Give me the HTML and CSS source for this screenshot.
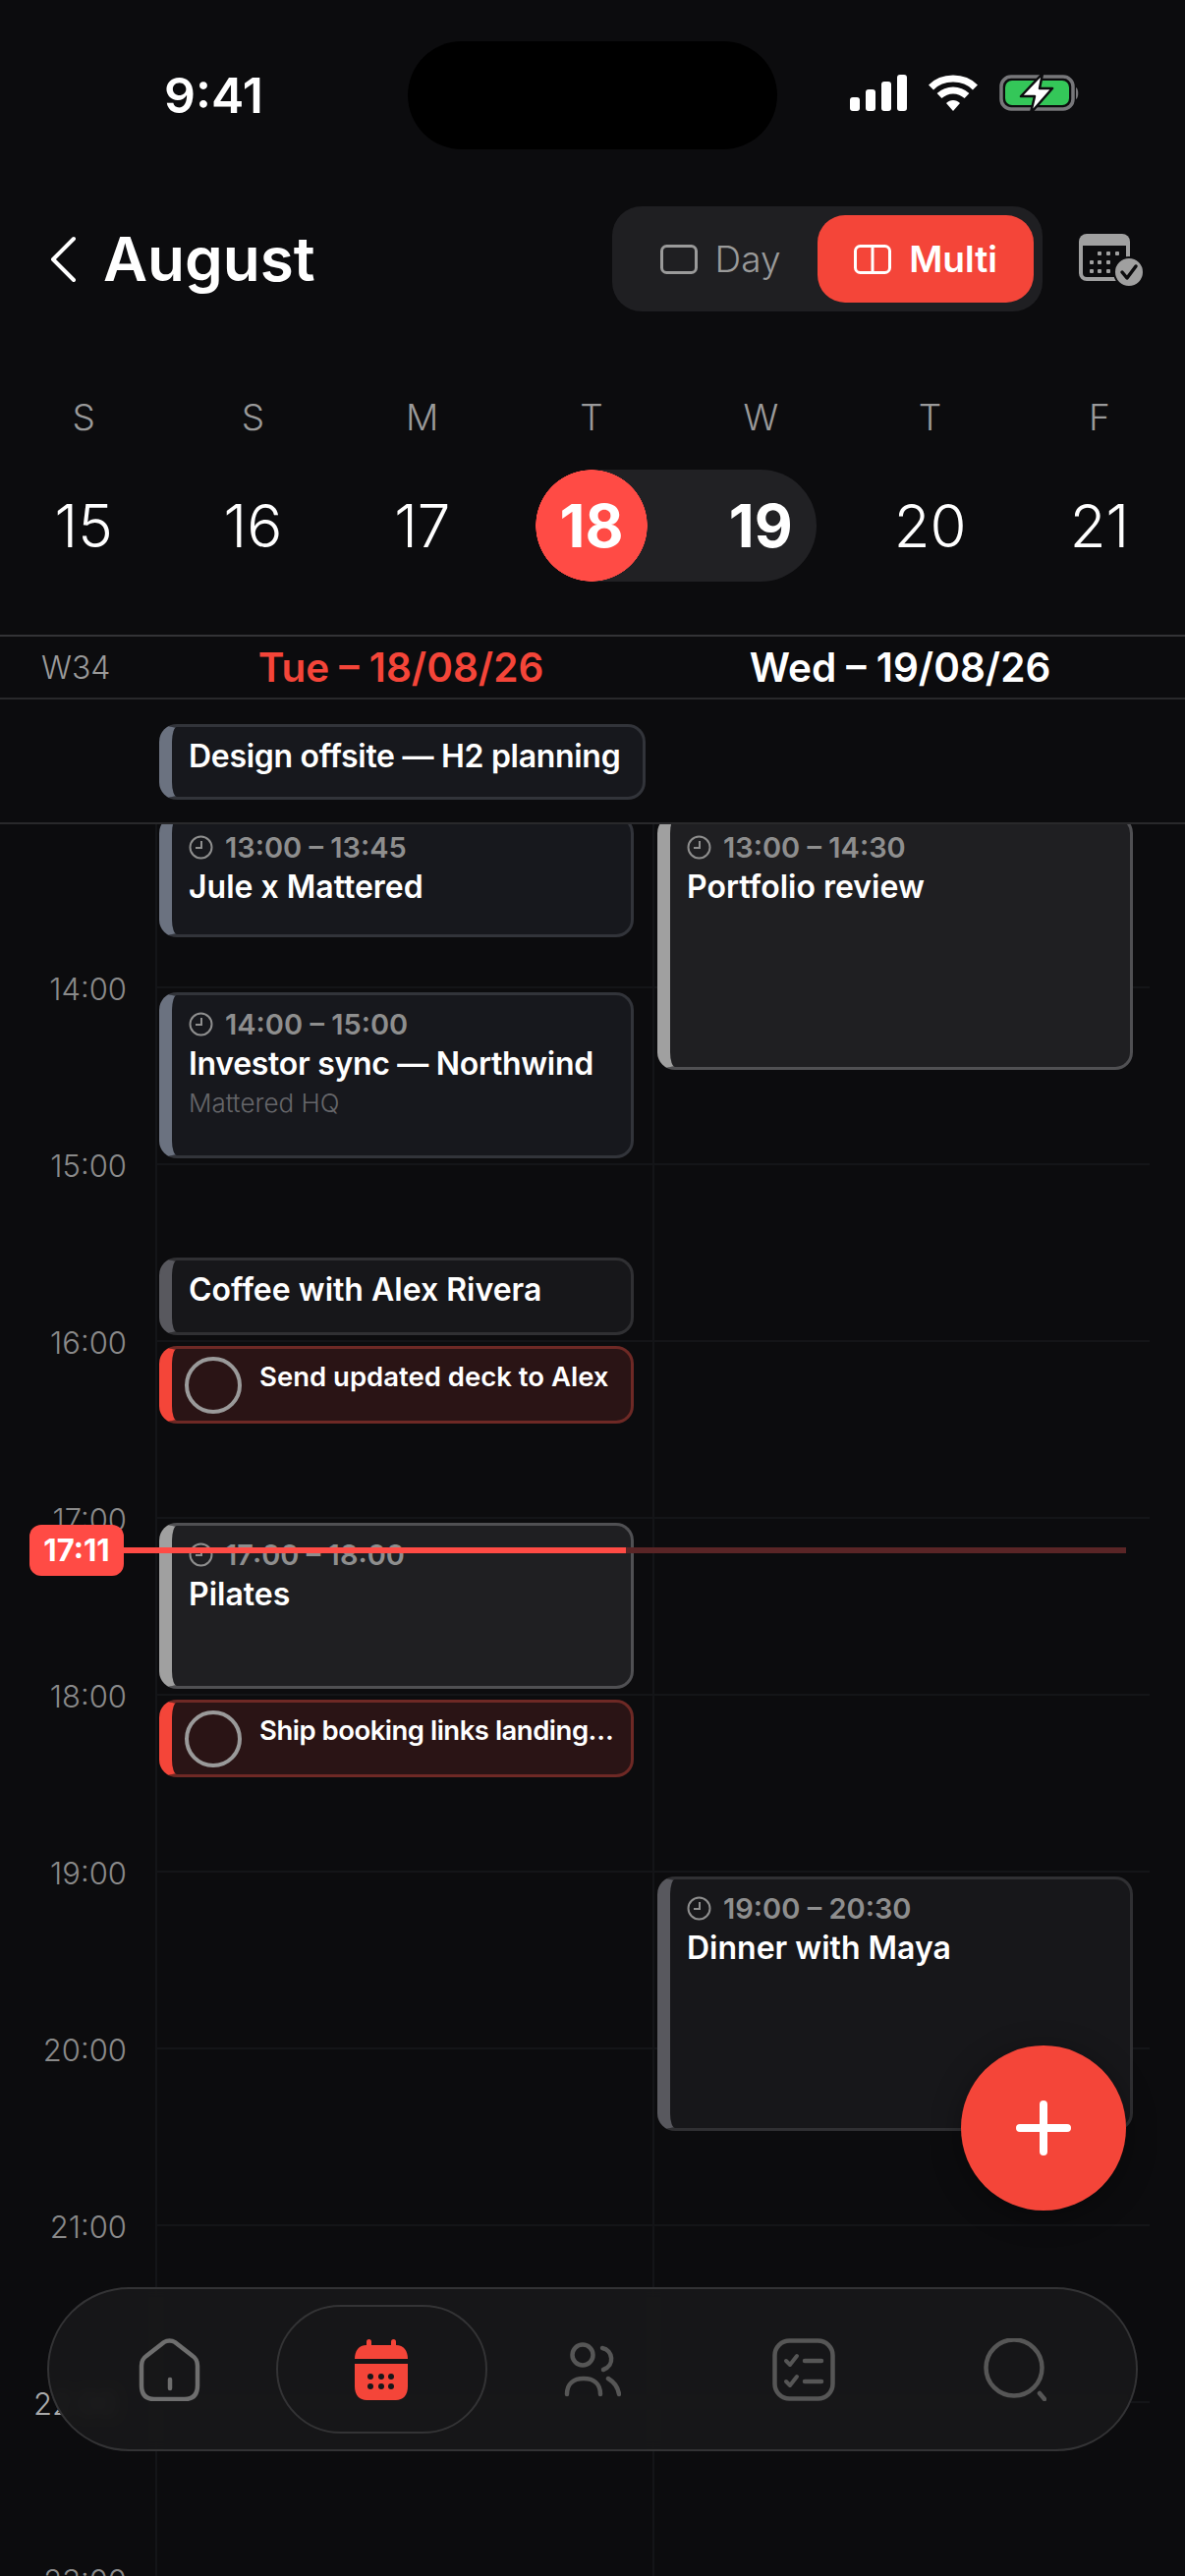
FILE: index.html
```html
<!DOCTYPE html>
<html>
  <head>
    <title>Calendar</title>
    <link rel="stylesheet" href="styles.css">
  </head>
  <body>
    <div class="phone">
      <div class="status-bar">
        <span class="clock">9:41</span>
        <div class="island"></div>
        <div class="status-icons">
          <svg width="58" height="37" viewBox="0 0 58 37" fill="#fff">
            <rect x="0" y="23" width="10" height="14" rx="3" />
            <rect x="16" y="15" width="10" height="22" rx="3" />
            <rect x="32" y="7" width="10" height="30" rx="3" />
            <rect x="48" y="0" width="10" height="37" rx="3" />
          </svg>
          <svg width="50" height="37" viewBox="0 0 50 37" fill="none" stroke="#fff" stroke-width="7">
            <path d="M2.5 13 C14 1 36 1 47.5 13" />
            <path d="M11 21.5 C19 14 31 14 39 21.5" />
            <path d="M18 29 L25 37 L32 29 C28 25 22 25 18 29 Z" fill="#fff" stroke="none" />
          </svg>
          <svg width="82" height="40" viewBox="0 0 82 40">
            <rect x="2" y="3" width="73" height="33" rx="10" fill="none" stroke="#77777a" stroke-width="3.5" />
            <rect x="6" y="7" width="65" height="25" rx="7" fill="#34c759" />
            <path d="M78 14 C81 15 81 25 78 26 Z" fill="#77777a" />
            <path d="M44 0 L22 23 H36 L32 40 L54 15 H41 Z" fill="#fff" stroke="#0c0c0e" stroke-width="2.5" stroke-linejoin="round" />
          </svg>
        </div>
      </div>

      <div class="top-bar">
        <svg class="back" width="28" height="48" viewBox="0 0 28 48" fill="none" stroke="#fff" stroke-width="4" stroke-linecap="round" stroke-linejoin="round">
          <path d="M25 3 L4 24 L25 45" />
        </svg>
        <h1>August</h1>
        <div class="toggle">
          <div class="toggle-item">
            <svg width="38" height="30" viewBox="0 0 38 30" fill="none" stroke="#9a9a9a" stroke-width="3">
              <rect x="1.5" y="1.5" width="35" height="27" rx="5" />
            </svg>
            Day
          </div>
          <div class="toggle-item active">
            <svg width="38" height="30" viewBox="0 0 38 30" fill="none" stroke="#fff" stroke-width="3">
              <rect x="1.5" y="1.5" width="35" height="27" rx="5" />
              <path d="M19 1.5 V28.5" />
            </svg>
            Multi
          </div>
        </div>
        <svg class="cal-check" width="66" height="54" viewBox="0 0 66 54">
          <path d="M8 0 H44 A8 8 0 0 1 52 8 V12 H0 V8 A8 8 0 0 1 8 0 Z" fill="#a0a0a0" />
          <path d="M2 10 V40 A6 6 0 0 0 8 46 H40 M50 10 V26" fill="none" stroke="#a0a0a0" stroke-width="4" />
          <g fill="#a0a0a0">
            <rect x="19" y="18" width="4" height="4" rx="1" /><rect x="28" y="18" width="4" height="4" rx="1" /><rect x="37" y="18" width="4" height="4" rx="1" />
            <rect x="11" y="27" width="4" height="4" rx="1" /><rect x="19" y="27" width="4" height="4" rx="1" /><rect x="28" y="27" width="4" height="4" rx="1" />
            <rect x="11" y="36" width="4" height="4" rx="1" /><rect x="19" y="36" width="4" height="4" rx="1" /><rect x="28" y="36" width="4" height="4" rx="1" />
          </g>
          <circle cx="51" cy="39" r="15" fill="#a0a0a0" stroke="#0c0c0e" stroke-width="2" />
          <path d="M44 39 L49 45 L58 33" fill="none" stroke="#0c0c0e" stroke-width="3.5" stroke-linecap="round" stroke-linejoin="round" />
        </svg>
      </div>

      <div class="week">
        <div class="week-day"><span class="letter">S</span><span class="date">15</span></div>
        <div class="week-day"><span class="letter">S</span><span class="date">16</span></div>
        <div class="week-day"><span class="letter">M</span><span class="date">17</span></div>
        <div class="week-day"><span class="letter">T</span><span class="date range-start">18</span></div>
        <div class="week-day"><span class="letter">W</span><span class="date range-end">19</span></div>
        <div class="week-day"><span class="letter">T</span><span class="date">20</span></div>
        <div class="week-day"><span class="letter">F</span><span class="date">21</span></div>
      </div>

      <div class="day-heads">
        <span class="week-no">W34</span>
        <span class="day-head today">Tue – 18/08/26</span>
        <span class="day-head">Wed – 19/08/26</span>
      </div>

      <div class="all-day">
        <div class="event blue">
          <div class="title tight">Design offsite — H2 planning</div>
        </div>
      </div>

      <div class="timeline">
        <div class="hours">
          <span>13:00</span><span>14:00</span><span>15:00</span><span>16:00</span><span>17:00</span>
          <span>18:00</span><span>19:00</span><span>20:00</span><span>21:00</span><span class="under-glass">22:00</span><span>23:00</span>
        </div>

        <div class="day-col">
          <div class="event blue" style="grid-row: 1 / span 3">
            <div class="time"><svg class="clock-icon" viewBox="0 0 25 25"><circle cx="12.5" cy="12.5" r="11" /><path d="M13 6 V13 H7" /></svg>13:00 – 13:45</div>
            <div class="title">Jule x Mattered</div>
          </div>
          <div class="event blue" style="grid-row: 5 / span 4">
            <div class="time"><svg class="clock-icon" viewBox="0 0 25 25"><circle cx="12.5" cy="12.5" r="11" /><path d="M13 6 V13 H7" /></svg>14:00 – 15:00</div>
            <div class="title tight">Investor sync — Northwind</div>
            <div class="place">Mattered HQ</div>
          </div>
          <div class="event dim" style="grid-row: 11 / span 2">
            <div class="title">Coffee with Alex Rivera</div>
          </div>
          <div class="event task" style="grid-row: 13 / span 2">
            <span class="check"></span>
            <span class="task-title">Send updated deck to Alex</span>
          </div>
          <div class="event bright" style="grid-row: 17 / span 4">
            <div class="time"><svg class="clock-icon" viewBox="0 0 25 25"><circle cx="12.5" cy="12.5" r="11" /><path d="M13 6 V13 H7" /></svg>17:00 – 18:00</div>
            <div class="title">Pilates</div>
          </div>
          <div class="event task" style="grid-row: 21 / span 2">
            <span class="check"></span>
            <span class="task-title tight">Ship booking links landing page</span>
          </div>
        </div>

        <div class="day-col">
          <div class="event bright" style="grid-row: 1 / span 6">
            <div class="time"><svg class="clock-icon" viewBox="0 0 25 25"><circle cx="12.5" cy="12.5" r="11" /><path d="M13 6 V13 H7" /></svg>13:00 – 14:30</div>
            <div class="title">Portfolio review</div>
          </div>
          <div class="event dim" style="grid-row: 25 / span 6">
            <div class="time"><svg class="clock-icon" viewBox="0 0 25 25"><circle cx="12.5" cy="12.5" r="11" /><path d="M13 6 V13 H7" /></svg>19:00 – 20:30</div>
            <div class="title">Dinner with Maya</div>
          </div>
        </div>
      </div>

      <!-- things that float over the timeline -->
      <div class="now-line"><span class="now-badge">17:11</span><span class="now-today"></span><span class="now-other"></span></div>

      <button class="fab">
        <svg width="56" height="56" viewBox="0 0 56 56" fill="none" stroke="#fff" stroke-width="8" stroke-linecap="round">
          <path d="M28 4 V52 M4 28 H52" />
        </svg>
      </button>

      <nav class="tab-bar">
        <div class="tab">
          <svg width="64" height="64" viewBox="0 0 64 64" fill="none" stroke="#6e6e6e" stroke-width="4.5" stroke-linejoin="round" stroke-linecap="round">
            <path d="M3 28 C3 23 5 20 8 18 L26 4 C29 2 34 2 37 4 L55 18 C58 20 60 23 60 28 V48 C60 57 56 62 47 62 H16 C7 62 3 57 3 48 Z" />
            <path d="M32 42 V51" />
          </svg>
        </div>
        <div class="tab active">
          <svg width="54" height="62" viewBox="0 0 54 62" fill="#f44539">
            <rect x="12" y="0" width="5" height="10" rx="2.5" />
            <rect x="37" y="0" width="5" height="10" rx="2.5" />
            <path d="M12 6 H42 C50 6 54 12 54 20 H0 C0 12 4 6 12 6 Z" />
            <path d="M0 25 H54 V48 C54 57 49 62 42 62 H12 C5 62 0 57 0 48 Z" />
            <g fill="#17171a">
              <circle cx="16" cy="38" r="3" /><circle cx="27" cy="38" r="3" /><circle cx="37" cy="38" r="3" />
              <circle cx="16" cy="48" r="3" /><circle cx="27" cy="48" r="3" /><circle cx="37" cy="48" r="3" />
            </g>
          </svg>
        </div>
        <div class="tab">
          <svg width="58" height="56" viewBox="0 0 58 56" fill="none" stroke="#565656" stroke-width="4.5" stroke-linecap="round">
            <circle cx="19" cy="13" r="10.5" />
            <path d="M3 53 C3 42 10 37 20 37 C30 37 37 42 37 53" />
            <path d="M39 6 C50 8 52 24 40 28" />
            <path d="M45 37 C50 40 55 46 56 53" />
          </svg>
        </div>
        <div class="tab">
          <svg width="64" height="64" viewBox="0 0 64 64" fill="none" stroke="#565656" stroke-width="4.5" stroke-linecap="round" stroke-linejoin="round">
            <rect x="2.5" y="2.5" width="59" height="59" rx="15" />
            <path d="M14 23 L18 27 L25 18 M14 44 L18 48 L25 39" stroke-width="4" />
            <path d="M33 23 H50 M33 44 H50" stroke-width="4.5" />
          </svg>
        </div>
        <div class="tab">
          <svg width="64" height="64" viewBox="0 0 64 64" fill="none" stroke="#565656" stroke-width="4.5" stroke-linecap="round">
            <circle cx="31" cy="30" r="28.5" />
            <path d="M57 56 L62 62" />
          </svg>
        </div>
      </nav>
    </div>
  </body>
</html>
```

FILE: styles.css
```css
* {
  box-sizing: border-box;
}

html,
body {
  margin: 0;
  padding: 0;
  background-color: #0c0c0e;
}

body {
  font-family: Inter, "Liberation Sans", sans-serif;
  color: #fff;
}

.phone {
  position: relative;
  display: flex;
  flex-direction: column;
  width: 1206px;
  height: 2622px;
  overflow: hidden;
}

/* status bar */
.status-bar {
  display: flex;
  align-items: center;
  height: 110px;
  margin-top: 42px;
  padding-left: 167px;
  flex-shrink: 0;
}

.clock {
  width: 248px;
  font-size: 50px;
  font-weight: 600;
}

.island {
  width: 376px;
  height: 110px;
  background-color: #000;
  border-radius: 55px;
}

.status-icons {
  display: flex;
  align-items: center;
  gap: 22px;
  margin-left: 74px;
  margin-top: -5px;
}

/* header */
.top-bar {
  display: flex;
  align-items: center;
  height: 107px;
  margin-top: 58px;
  padding-left: 50px;
  flex-shrink: 0;
}

.top-bar h1 {
  margin: 0 0 0 27px;
  width: 518px;
  font-size: 62px;
  font-weight: 600;
  line-height: 1;
}

.toggle {
  display: flex;
  align-items: center;
  justify-content: space-between;
  width: 438px;
  height: 107px;
  padding-left: 11px;
  padding-right: 9px;
  background-color: #1f1f22;
  border-radius: 30px;
}

.toggle-item {
  display: flex;
  align-items: center;
  justify-content: center;
  gap: 18px;
  width: 199px;
  height: 89px;
  font-size: 37px;
  font-weight: 300;
  color: #9a9a9a;
  border-radius: 28px;
}

.toggle-item.active {
  width: 221px;
  background-color: #f44539;
  font-weight: 600;
  color: #fff;
}

.cal-check {
  margin-left: 37px;
  margin-top: 2px;
}

/* week strip */
.week {
  display: grid;
  grid-template-columns: repeat(7, 172.3px);
  height: 329px;
  margin-left: -1px;
  padding-top: 85px;
  flex-shrink: 0;
}

.week-day {
  display: flex;
  flex-direction: column;
  align-items: center;
}

.letter {
  height: 46px;
  font-size: 37px;
  line-height: 46px;
  font-weight: 300;
  color: #9a9a9a;
}

.date {
  display: flex;
  align-items: center;
  justify-content: center;
  width: 100%;
  height: 114px;
  margin-top: 30px;
  font-size: 60px;
  font-weight: 300;
}

.range-start {
  font-weight: 700;
  background:
    radial-gradient(circle 57px at 50% 50%, #ff4b45 56.5px, transparent 57px),
    linear-gradient(90deg, transparent 50%, #212124 50%);
}

.range-end {
  align-self: flex-start;
  width: 143px;
  padding-left: 29px;
  font-weight: 700;
  background-color: #212124;
  border-radius: 0 57px 57px 0;
}

/* day headings */
.day-heads {
  display: grid;
  grid-template-columns: 158px 500px 516px;
  align-items: center;
  height: 66px;
  padding-top: 1px;
  border-top: 2px solid #333336;
  border-bottom: 2px solid #29292b;
  flex-shrink: 0;
}

.week-no {
  font-size: 32px;
  font-weight: 300;
  color: #9a9a9a;
  padding-left: 42px;
}

.day-head {
  font-size: 40.5px;
  font-weight: 600;
  text-align: center;
}

.day-head.today {
  color: #f44539;
}

/* events */
.all-day {
  height: 127px;
  padding: 25px 0 0 162px;
  border-bottom: 2px solid #29292b;
  flex-shrink: 0;
}

.all-day .event {
  width: 495px;
  height: 77px;
  margin: 0;
}

.event {
  min-width: 0;
  margin: 5px 0 6px;
  padding: 9px 10px 0 17px;
  background-color: #17181d;
  border: 3px solid #32343a;
  border-left: 13px solid #6b7280;
  border-radius: 18px;
  overflow: hidden;
}

.event.dim {
  background-color: #17171a;
  border-color: #303033;
  border-left-color: #58585e;
}

.event.bright {
  background-color: #1f1f22;
  border-color: #505053;
  border-left-color: #a0a0a0;
}

.time {
  display: flex;
  align-items: center;
  gap: 12px;
  font-size: 29px;
  line-height: 41px;
  font-weight: 600;
  color: #8e8e8e;
}

.clock-icon {
  width: 25px;
  height: 25px;
  fill: none;
  stroke: #8e8e8e;
  stroke-width: 2;
}

.title {
  font-size: 32px;
  line-height: 41px;
  font-weight: 600;
  white-space: nowrap;
}

.time + .title {
  margin-top: -1px;
}

.title.tight {
  letter-spacing: -0.3px;
}

.place {
  font-size: 26px;
  line-height: 39px;
  font-weight: 300;
  color: #66666a;
}

.event.task {
  display: flex;
  align-items: flex-start;
  gap: 18px;
  padding: 8px 10px 0 13px;
  background-color: #2a1415;
  border-color: #6e2925;
  border-left-color: #f44539;
}

.check {
  width: 58px;
  height: 58px;
  flex-shrink: 0;
  border: 4px solid #9a9a9a;
  border-radius: 50%;
}

.task-title {
  min-width: 0;
  margin-right: 7px;
  font-size: 27.5px;
  line-height: 40px;
  font-weight: 600;
  white-space: nowrap;
  overflow: hidden;
  text-overflow: ellipsis;
}

.task-title.tight {
  letter-spacing: -0.5px;
}

/* timeline: 15 minute rows, 180px an hour */
.timeline {
  display: grid;
  grid-template-columns: 162px 483px 24px 484px;
  flex: 1;
  min-height: 0;
  overflow: hidden;
  background-image:
    linear-gradient(90deg, transparent 158px, #141518 158px, #141518 160px, transparent 160px, transparent 664px, #141518 664px, #141518 666px, transparent 666px),
    repeating-linear-gradient(180deg, transparent 0, transparent 165px, #141518 165px, #141518 167px, transparent 167px, transparent 180px);
  background-size: 100% 100%, 1012px 100%;
  background-position: 0 0, 158px 0;
  background-repeat: no-repeat;
}

.hours {
  display: flex;
  flex-direction: column;
  align-items: flex-end;
  margin-top: -102px;
  padding-right: 33px;
}

.hours span {
  flex-shrink: 0;
  height: 180px;
  line-height: 180px;
  font-size: 31px;
  font-weight: 300;
  color: #8a8a8a;
}

/* the glass tab bar bends this label to the left */
.hours .under-glass {
  margin-right: 10px;
  color: #aaa;
}

.day-col {
  display: grid;
  grid-template-rows: repeat(48, 45px);
  align-content: start;
  height: 2160px;
  margin-top: -14px;
}

.day-col:last-child {
  grid-column: 4;
}

/* now line */
.now-line {
  position: absolute;
  left: 30px;
  top: 1552px;
  width: 1116px;
  height: 52px;
}

.now-badge {
  position: absolute;
  left: 0;
  top: 0;
  width: 96px;
  height: 52px;
  font-size: 31px;
  line-height: 52px;
  font-weight: 700;
  text-align: center;
  background-color: #ff4b45;
  border-radius: 12px;
}

.now-today,
.now-other {
  position: absolute;
  top: 23px;
  height: 6px;
  background-color: #ff4b45;
}

.now-today {
  left: 96px;
  width: 511px;
}

.now-other {
  left: 607px;
  width: 509px;
  background-color: #5a2526;
}

/* floating add button */
.fab {
  position: absolute;
  left: 978px;
  top: 2082px;
  display: flex;
  align-items: center;
  justify-content: center;
  width: 168px;
  height: 168px;
  padding: 0;
  background-color: #f44539;
  border: none;
  border-radius: 50%;
  box-shadow: 0 6px 30px rgba(0, 0, 0, 0.35);
}

/* bottom tabs */
.tab-bar {
  position: absolute;
  left: 48px;
  top: 2328px;
  display: grid;
  grid-template-columns: repeat(5, 215px);
  justify-content: center;
  align-items: center;
  width: 1110px;
  height: 167px;
  background-color: rgba(24, 24, 25, 0.92);
  border: 2px solid #333335;
  border-radius: 84px;
  backdrop-filter: blur(6px);
}

.tab {
  display: flex;
  align-items: center;
  justify-content: center;
  height: 131px;
}

.tab.active {
  border: 2px solid #333335;
  border-radius: 66px;
}
```
